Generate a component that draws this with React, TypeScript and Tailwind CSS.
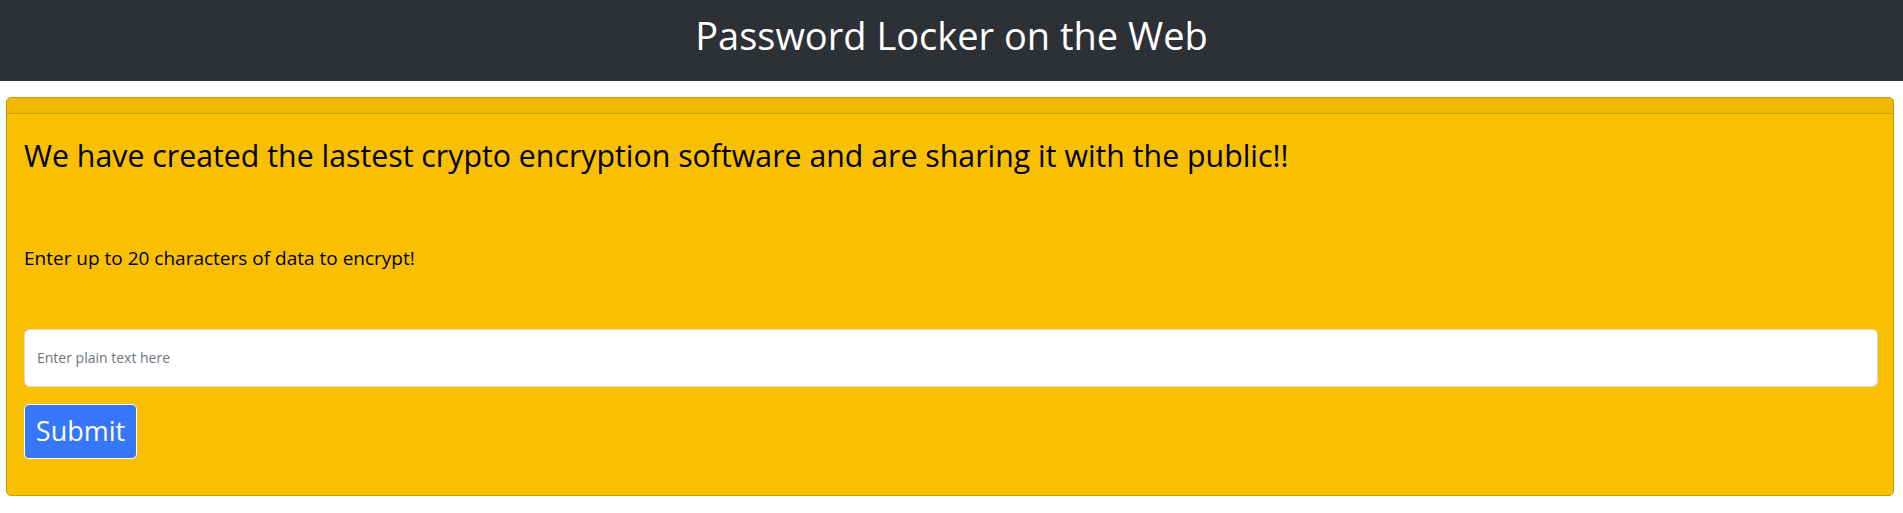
export default function App() {
  return (
    <div className="min-h-screen bg-white font-['Open_Sans',sans-serif] text-[#000]">
      {/* top bar */}
      <header className="flex h-[81px] items-center justify-center bg-[#2d3035] pb-[10px] text-[38px] text-white">
        Password Locker on the Web
      </header>

      {/* card */}
      <div className="ml-[6px] mr-[9px] mt-4 rounded-[5px] border border-[#c99c00] bg-[#f8c000]">
        <div className="h-[16px] rounded-t-[4px] border-b border-[#c99c00] bg-[#f0b900]" />
        <div className="pb-9 pl-[17px] pr-[15px] pt-[24px]">
          <h3 className="text-[30.3px] leading-[1.2] font-normal">
            We have created the lastest crypto encryption software and are sharing it with the public!!
          </h3>
          <p className="mt-[70px] text-[19px] leading-[1.5]">
            Enter up to 20 characters of data to encrypt!
          </p>
          <input
            type="text"
            placeholder="Enter plain text here"
            className="mt-[56px] block h-[58px] w-full rounded-[6px] border border-[#d8d8d8] bg-white px-[12px] text-[14px] placeholder:text-[#6c757d] focus:outline-none"
          />
          <button
            type="button"
            className="mt-[17px] flex h-[55px] w-[113px] items-center justify-center rounded-[5px] border border-white bg-[#3676fa] text-[27px] text-white"
          >
            Submit
          </button>
        </div>
      </div>
    </div>
  );
}
